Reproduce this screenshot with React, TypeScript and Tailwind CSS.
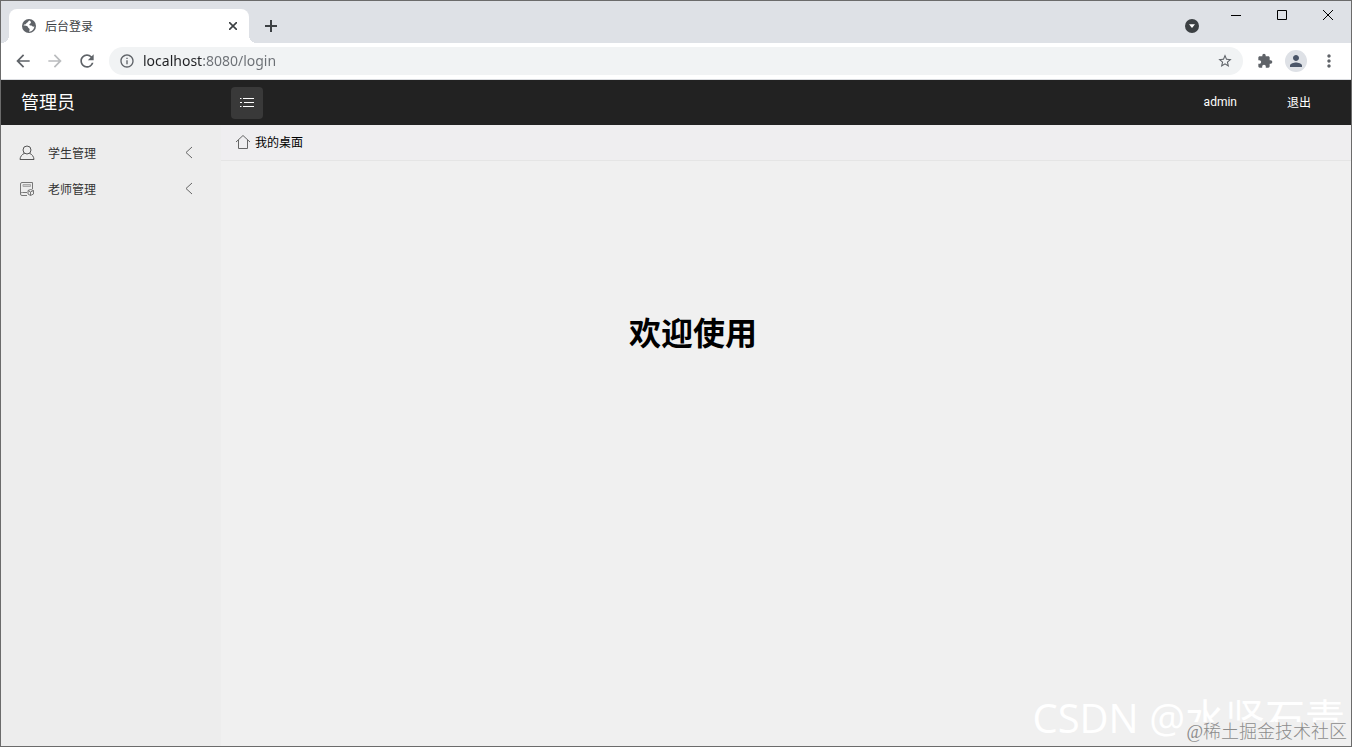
import {
  MdArrowBack,
  MdArrowForward,
  MdExtension,
  MdInfoOutline,
  MdMoreVert,
  MdPerson,
  MdRefresh,
  MdStarBorder,
} from "react-icons/md";

function WindowControls() {
  return (
    <div className="flex items-start">
      <button aria-label="Search tabs" className="mt-[18px] mr-3.5 flex h-3.5 w-3.5 items-center justify-center rounded-full bg-[#3c4043]">
        <svg viewBox="0 0 14 14" className="h-3.5 w-3.5 fill-white">
          <path d="M4 5.2h6L7 9z" />
        </svg>
      </button>
      <button aria-label="Minimize" className="flex h-7 w-[46px] items-center justify-center">
        <svg viewBox="0 0 10 10" className="h-2.5 w-2.5 stroke-black" fill="none">
          <path d="M0 5.5h10" />
        </svg>
      </button>
      <button aria-label="Maximize" className="flex h-7 w-[46px] items-center justify-center">
        <svg viewBox="0 0 10 10" className="h-2.5 w-2.5 stroke-black" fill="none">
          <path d="M.5.5h9v9h-9z" />
        </svg>
      </button>
      <button aria-label="Close" className="flex h-7 w-[46px] items-center justify-center">
        <svg viewBox="0 0 10 10" className="h-2.5 w-2.5 stroke-black" fill="none">
          <path d="M0 0l10 10M10 0L0 10" />
        </svg>
      </button>
    </div>
  );
}

function GlobeIcon() {
  return (
    <svg viewBox="0 0 16 16" className="h-4 w-4">
      <circle cx="8" cy="8" r="7" fill="#5f6368" />
      <path d="M8.500 2.500C7 3 7.200 4.300 6 4.700c-.8.300-.6 1.300-1.500 1.500-.8.200-1.500.300-2 1.300 1.500-.3 2.800 0 3.800.8.900.7.500 1.500 1.500 1.900 1.200.400 1 1.700.2 3.600 3-.2 5.200-2.500 5.400-5.500-1 .600-1.700.300-2.300-.3-.8-.8-2.100-.2-2.600-1-.5-.9.500-1.300 1.200-1.700.8-.5-.2-1.300 0-1.900z" fill="#fff" />
    </svg>
  );
}

function TabStrip() {
  return (
    <div className="flex h-[42px] justify-between bg-[#dee1e6] pl-2">
      <div className="flex items-end">
        <div className="relative flex h-[34px] w-60 items-center rounded-t-lg bg-white pr-2 pl-3 text-[#3c4043]">
          {/* flared bottom corners of the active tab */}
          <span className="absolute bottom-0 -left-2 h-2 w-2 bg-[radial-gradient(circle_at_0_0,#dee1e6_8px,#fff_8px)]" />
          <span className="absolute -right-2 bottom-0 h-2 w-2 bg-[radial-gradient(circle_at_100%_0,#dee1e6_8px,#fff_8px)]" />
          <GlobeIcon />
          <span className="ml-2 flex-1 text-xs">后台登录</span>
          <button aria-label="Close tab" className="flex h-4 w-4 items-center justify-center">
            <svg viewBox="0 0 8 8" className="h-2 w-2 stroke-[#3c4043]" strokeWidth="1.6" fill="none">
              <path d="M0 0l8 8M8 0L0 8" />
            </svg>
          </button>
        </div>
        <button aria-label="New tab" className="ml-2 flex h-[34px] w-7 items-center justify-center">
          <svg viewBox="0 0 12 12" className="h-3 w-3 stroke-[#3c4043]" strokeWidth="2" fill="none">
            <path d="M6 0v12M0 6h12" />
          </svg>
        </button>
      </div>
      <WindowControls />
    </div>
  );
}

function Toolbar() {
  return (
    <div className="flex h-[37px] items-center border-b border-[#dadce0] bg-white px-3 text-[#5f6368]">
      <div className="flex items-center gap-3">
        <button aria-label="Back">
          <MdArrowBack className="h-5 w-5" />
        </button>
        <button aria-label="Forward">
          <MdArrowForward className="h-5 w-5 text-[#babcbe]" />
        </button>
        <button aria-label="Reload">
          <MdRefresh className="h-5 w-5" />
        </button>
      </div>
      <div className="ml-3 flex h-7 flex-1 items-center rounded-full bg-[#f1f3f4] px-2.5">
        <MdInfoOutline className="h-4 w-4" />
        {/* host is darker than the rest of the address */}
        <input
          aria-label="Address"
          readOnly
          value="localhost:8080/login"
          className="ml-2 flex-1 bg-[linear-gradient(to_right,#202124_60px,#6b6f74_60px)] bg-clip-text font-['Noto_Sans','Open_Sans',sans-serif] text-sm text-transparent outline-none"
        />
        <button aria-label="Bookmark">
          <MdStarBorder className="h-4 w-4" />
        </button>
      </div>
      <button aria-label="Extensions" className="ml-3.5">
        <MdExtension className="h-4 w-4" />
      </button>
      <button aria-label="Profile" className="ml-3 flex h-[22px] w-[22px] items-center justify-center rounded-full bg-[#dee1e6]">
        <MdPerson className="h-[18px] w-[18px] text-[#4a5568]" />
      </button>
      <button aria-label="Menu" className="ml-3">
        <MdMoreVert className="h-5 w-5" />
      </button>
    </div>
  );
}

function Header() {
  return (
    <header className="flex h-[45px] items-center bg-[#222] text-white">
      <div className="w-[220px] pb-1 pl-5 text-lg">管理员</div>
      <button aria-label="Toggle sidebar" className="ml-2.5 flex h-8 w-8 items-center justify-center rounded-sm bg-[#393939]">
        <svg viewBox="0 0 16 16" className="h-4 w-4 stroke-white" fill="none">
          <path d="M4 3.5h11M5 7.5h10M4 11.5h11M1 3.5h1.5M1 7.5h2M1 11.5h1.5" />
        </svg>
      </button>
      <nav className="mr-10 ml-auto flex gap-[50px] pb-0.5 text-xs">
        <a href="#admin" className="font-[Roboto,sans-serif]">admin</a>
        <a href="#logout">退出</a>
      </nav>
    </header>
  );
}

function StudentIcon() {
  return (
    <svg viewBox="0 0 16 16" className="h-4 w-4 stroke-[#555]" fill="none">
      <circle cx="8" cy="5" r="4" />
      <path d="M5.5 8.3C3 9.3 1.2 11.5 1 14.5h14c-.2-3-2-5.2-4.5-6.2" />
    </svg>
  );
}

function TeacherIcon() {
  return (
    <svg viewBox="0 0 16 16" className="h-4 w-4 stroke-[#777]" fill="none">
      <path d="M8 14.5H3A1.500 1.500 0 0 1 1.500 13V3A1.500 1.500 0 0 1 3 1.500h10.500V8M1.500 12.500c.3-.8 1-1 2-1H8" />
      <path d="M4 3.500h7.500v2H4z" fill="#ccc" stroke="#aaa" />
      <path d="M9 9.500l2.500-1 3 1v3.500l-3 1.500-2.500-1.500zM9 9.500l2.500 1.500 3-1.500M11.500 11v3.500" />
    </svg>
  );
}

const menu = [
  { name: "学生管理", icon: <StudentIcon /> },
  { name: "老师管理", icon: <TeacherIcon /> },
];

function Sidebar() {
  return (
    <aside className="w-[220px] bg-[#ededed] pt-2.5">
      {menu.map((item) => (
        <button key={item.name} className="flex h-9 w-full items-center pr-7 pl-[18px] text-xs text-[#333]">
          {item.icon}
          <span className="ml-[13px]">{item.name}</span>
          <svg viewBox="0 0 8 14" className="ml-auto h-3.5 w-2 stroke-[#666]" fill="none">
            <path d="M7 1L1 6.500l6 5.500" />
          </svg>
        </button>
      ))}
    </aside>
  );
}

function Desktop() {
  return (
    <main className="flex-1 bg-[#f0f0f0]">
      <div className="flex h-9 items-center gap-1 border-b border-[#e5e5e5] bg-[#efeef0] pb-0.5 pl-3.5 text-xs text-black">
        <svg viewBox="0 0 16 16" className="h-4 w-4 stroke-[#666]" fill="none">
          <path d="M1 8l7-6.500L15 8M3.500 6v8.500h9V6" />
        </svg>
        我的桌面
      </div>
      <h1 className="pt-[146px] pl-[408px] text-[32px] leading-[48px] font-bold text-black">欢迎使用</h1>
    </main>
  );
}

export default function App() {
  return (
    <div className="relative flex min-h-screen flex-col overflow-hidden border border-[#6b6b6b] font-['Noto_Sans_CJK_SC',sans-serif]">
      <TabStrip />
      <Toolbar />
      <Header />
      <div className="flex flex-1">
        <Sidebar />
        <Desktop />
      </div>
      <div className="pointer-events-none absolute right-1.5 bottom-0 font-['Open_Sans','Noto_Sans_CJK_SC',sans-serif] text-[40px] leading-[56px] whitespace-nowrap text-white">
        CSDN @水坚石青
      </div>
      <div className="pointer-events-none absolute right-1 bottom-1 bg-[#f0f0f0] font-['Liberation_Serif','Noto_Sans_CJK_SC',serif] text-lg leading-5 font-light whitespace-nowrap text-[#8c8c8c]">
        @稀土掘金技术社区
      </div>
    </div>
  );
}
